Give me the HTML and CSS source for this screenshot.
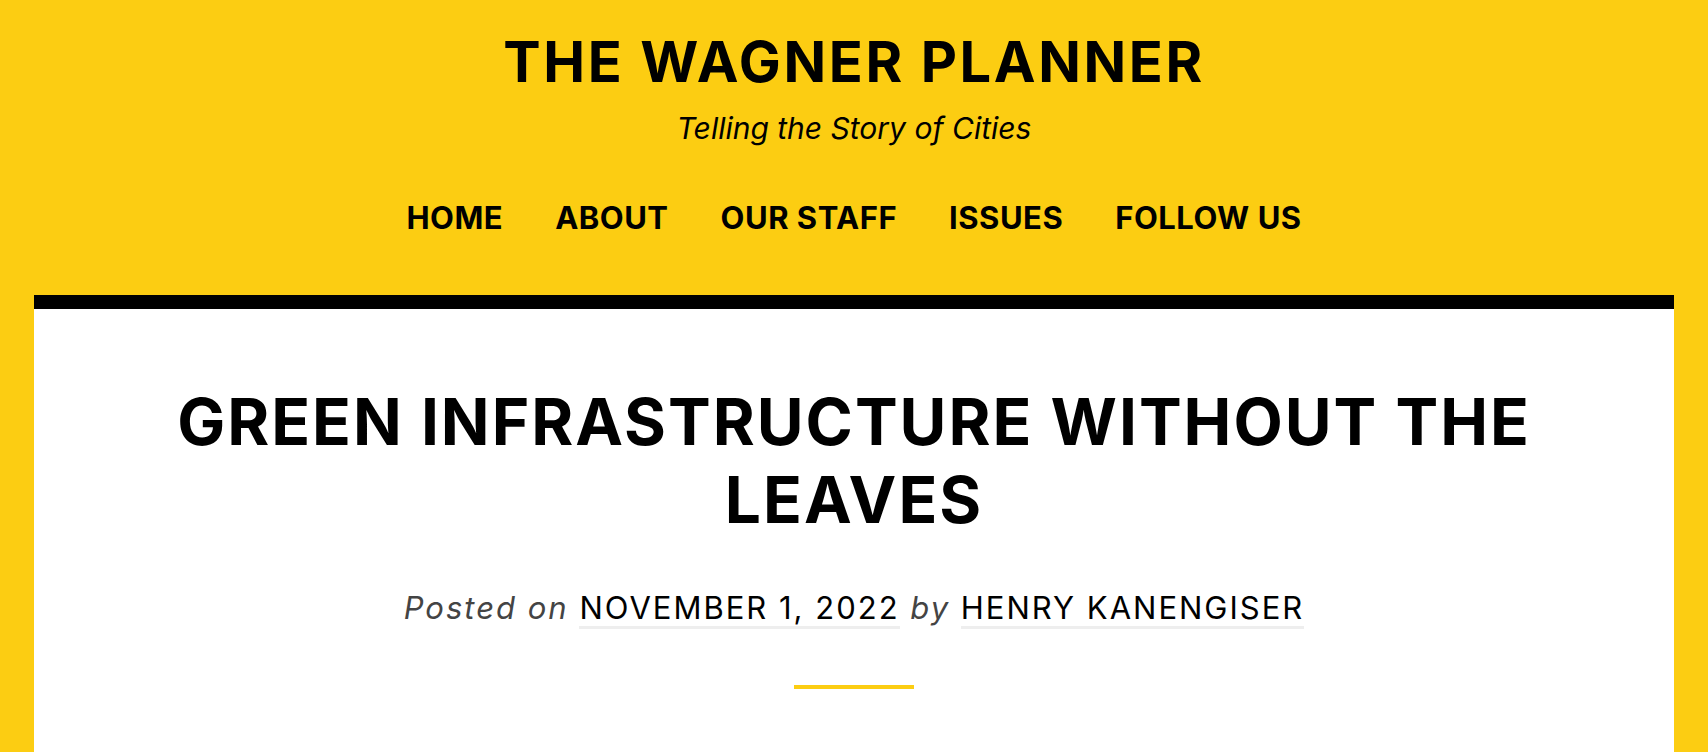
FILE: index.html
```html
<!DOCTYPE html>
<html lang="en">
<head>
<meta charset="utf-8">
<title>The Wagner Planner</title>
<link rel="stylesheet" href="styles.css">
</head>
<body>
<header class="site-header">
  <h1 class="site-title">THE WAGNER PLANNER</h1>
  <p class="site-tagline">Telling the Story of Cities</p>
  <nav class="site-nav">
    <a href="#">HOME</a>
    <a href="#">ABOUT</a>
    <a href="#">OUR STAFF</a>
    <a href="#">ISSUES</a>
    <a href="#">FOLLOW US</a>
  </nav>
</header>
<main class="content">
  <article class="post">
    <h2 class="post-title">GREEN INFRASTRUCTURE WITHOUT THE LEAVES</h2>
    <p class="post-meta"><em>Posted on</em> <a href="#">NOVEMBER 1, 2022</a> <em>by</em> <a href="#">HENRY KANENGISER</a></p>
    <div class="post-divider"></div>
  </article>
</main>
</body>
</html>
```
FILE: styles.css
```css
html, body {
  margin: 0;
  padding: 0;
}
body {
  background: #fccd12;
  font-family: Inter, "Liberation Sans", sans-serif;
  color: #000;
  height: 752px;
  overflow: hidden;
  display: flex;
  flex-direction: column;
}
.site-header {
  padding-top: 29px;
  text-align: center;
}
.site-title {
  margin: 0;
  font-size: 56px;
  line-height: 67px;
  font-weight: 700;
  letter-spacing: 2.6px;
}
.site-tagline {
  margin: 13px 0 0;
  font-size: 30px;
  line-height: 38px;
  font-style: italic;
}
.site-nav {
  margin-top: 52px;
  display: flex;
  justify-content: center;
  gap: 52px;
}
.site-nav a {
  color: #000;
  text-decoration: none;
  font-weight: 700;
  font-size: 31px;
  line-height: 38px;
  letter-spacing: 0.5px;
}
.content {
  margin: 58px 34px 0;
  border-top: 14px solid #000;
  background: #fff;
  flex: 1;
}
.post {
  padding-top: 74px;
  text-align: center;
}
.post-title {
  margin: 0 auto;
  max-width: 1400px;
  font-size: 64px;
  line-height: 78px;
  font-weight: 700;
  letter-spacing: 2px;
}
.post-meta {
  margin: 48px 0 0;
  font-size: 31px;
  line-height: 41px;
  letter-spacing: 2px;
}
.post-meta em {
  color: #444;
}
.post-meta a {
  color: #000;
  text-decoration: none;
  border-bottom: 3px solid #eee;
}
.post-divider {
  width: 120px;
  height: 4px;
  background: #fccd12;
  margin: 57px auto 0;
}
```
